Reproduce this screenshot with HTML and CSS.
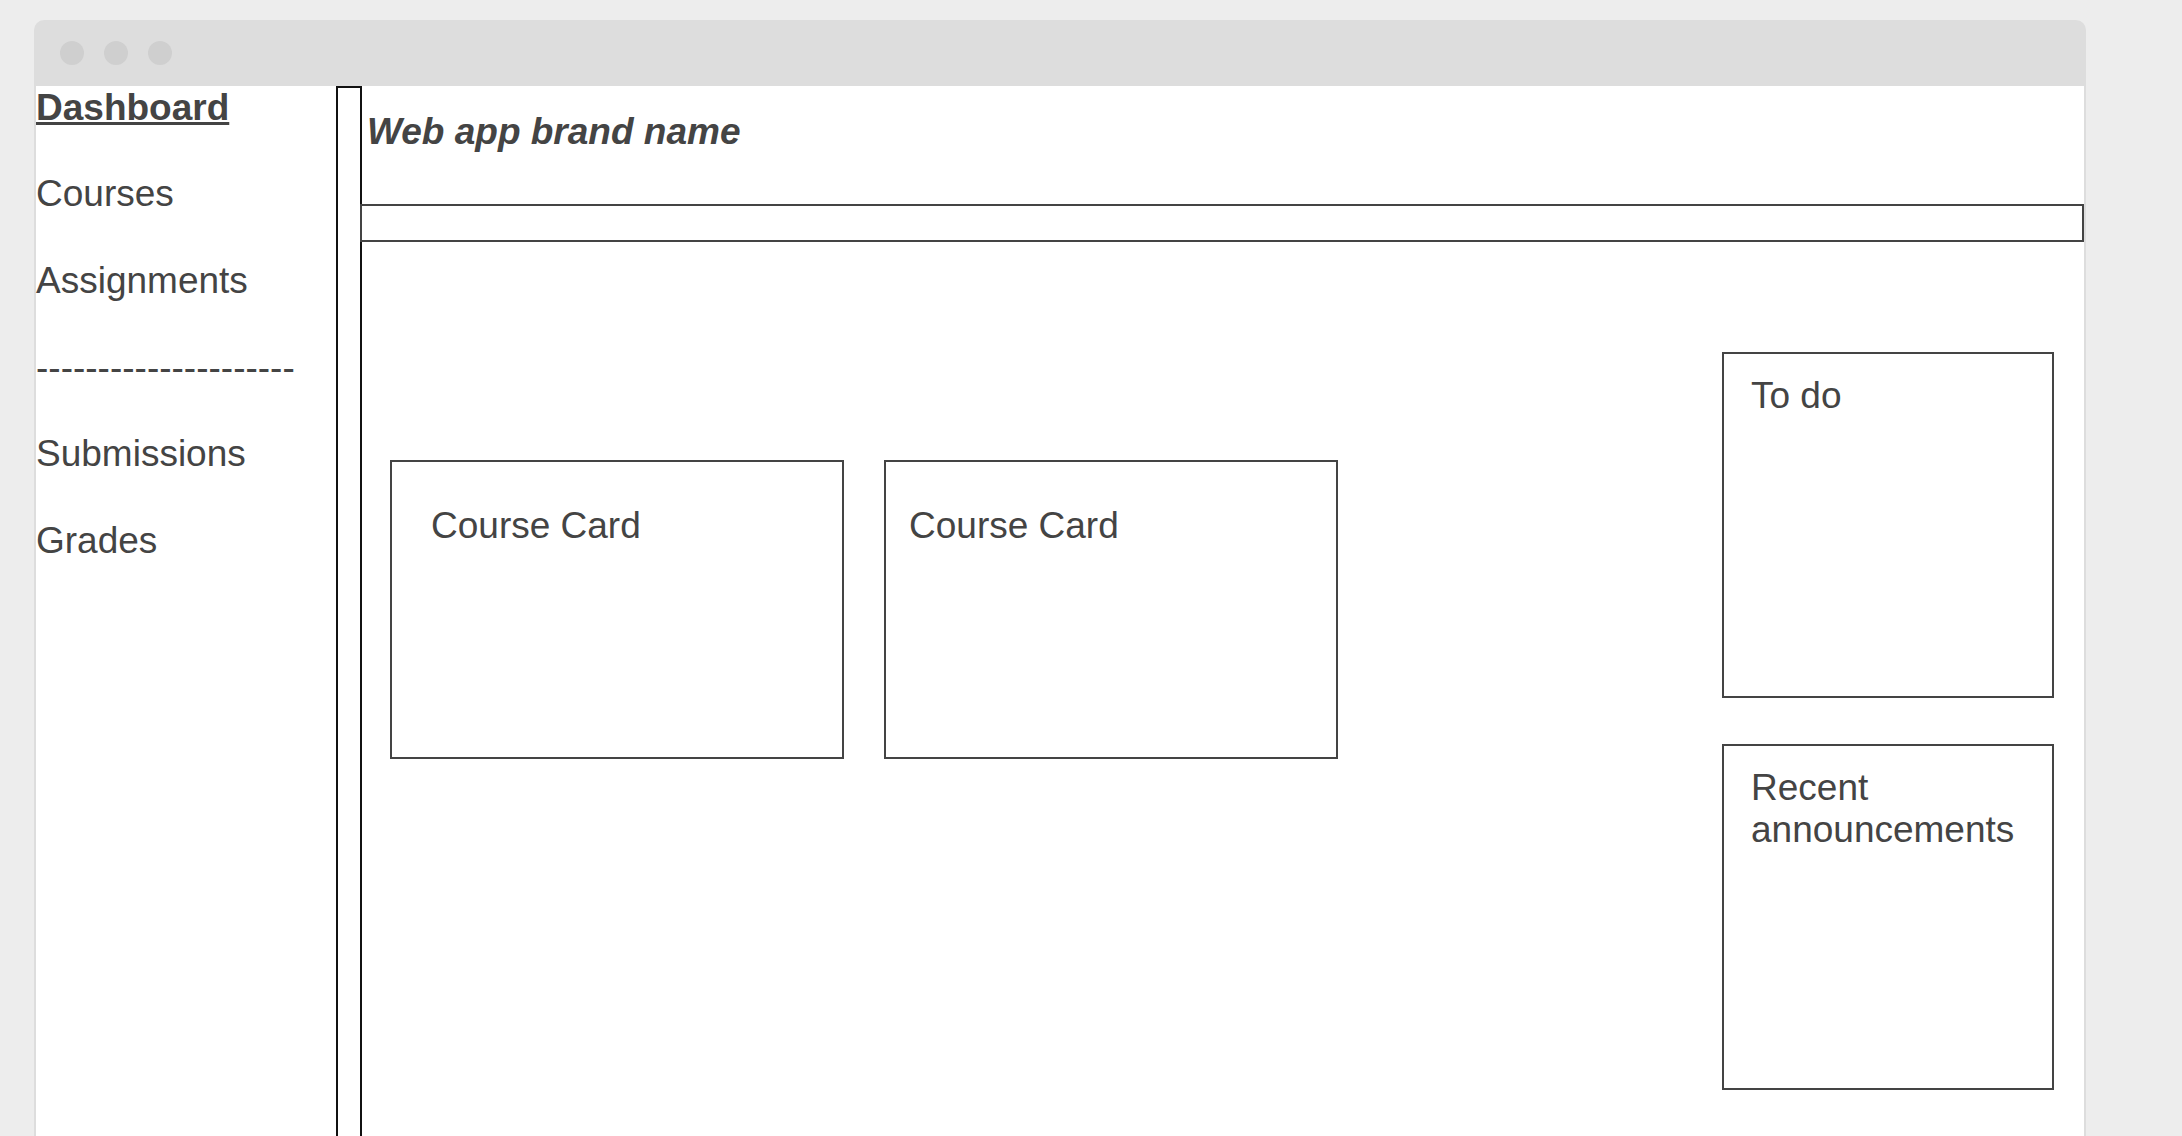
FILE: index.html
```html
<!DOCTYPE html>
<html lang="en">
<head>
<meta charset="utf-8">
<title>Dashboard wireframe</title>
<link rel="stylesheet" href="styles.css">
</head>
<body>
<div class="window">
  <div class="titlebar">
    <span class="dot"></span>
    <span class="dot"></span>
    <span class="dot"></span>
  </div>
  <div class="app">
    <nav class="sidebar">
      <a class="nav-item active" href="#">Dashboard</a>
      <a class="nav-item" href="#">Courses</a>
      <a class="nav-item" href="#">Assignments</a>
      <div class="nav-item nav-sep">---------------------</div>
      <a class="nav-item" href="#">Submissions</a>
      <a class="nav-item" href="#">Grades</a>
    </nav>
    <div class="divider"></div>
    <main class="main">
      <header class="brand-row">
        <h1 class="brand">Web app brand name</h1>
      </header>
      <div class="search-bar"></div>
      <div class="content">
        <div class="cards">
          <div class="card card-a">Course Card</div>
          <div class="card card-b">Course Card</div>
        </div>
        <aside class="panels">
          <section class="panel">To do</section>
          <section class="panel">Recent announcements</section>
        </aside>
      </div>
    </main>
  </div>
</div>
</body>
</html>
```

FILE: styles.css
```css
html, body {
  margin: 0;
  padding: 0;
  height: 1136px;
  overflow: hidden;
  background: #ededed;
}

body {
  font-family: "Liberation Sans", Arial, sans-serif;
  color: #444444;
  font-size: 37px;
}

.window {
  margin: 20px 0 0 34px;
  width: 2052px;
  height: 1116px;
  box-sizing: border-box;
  background: #dddddd;
  border-radius: 10px 10px 0 0;
  padding: 0 2px;
  display: flex;
  flex-direction: column;
}

.titlebar {
  height: 66px;
  flex: none;
  display: flex;
  align-items: center;
  gap: 20px;
  padding-left: 24px;
}

.dot {
  width: 24px;
  height: 24px;
  border-radius: 50%;
  background: #cfcfcf;
}

.app {
  flex: 1;
  background: #ffffff;
  display: flex;
  min-height: 0;
}

.sidebar {
  width: 300px;
  flex: none;
  padding-top: 0.9px;
  display: flex;
  flex-direction: column;
}

.nav-item {
  display: block;
  color: #444444;
  text-decoration: none;
  line-height: 42.5px;
  margin-bottom: 44.1px;
  white-space: nowrap;
}

.nav-item.active {
  font-weight: bold;
  text-decoration: underline;
}

.divider {
  width: 22px;
  flex: none;
  border: 2px solid #111111;
  border-bottom: none;
}

.main {
  flex: 1;
  display: flex;
  flex-direction: column;
  min-width: 0;
}

.brand-row {
  height: 118px;
  box-sizing: border-box;
  padding: 25px 0 0 5px;
}

.brand {
  margin: 0;
  font-size: 37px;
  font-weight: bold;
  font-style: italic;
  line-height: 42.5px;
}

.search-bar {
  height: 34px;
  border: 2px solid #444444;
  margin-left: -2px;
}

.content {
  display: flex;
  align-items: flex-start;
}

.cards {
  display: flex;
  gap: 40px;
  padding-left: 28px;
  margin-top: 218px;
}

.card {
  border: 2px solid #444444;
  padding-top: 42.6px;
  height: 252.4px;
  box-sizing: content-box;
  line-height: 42.5px;
}

.card.card-a {
  width: 411px;
  padding-left: 39px;
}

.card.card-b {
  width: 427px;
  padding-left: 23px;
}

.panels {
  margin-left: auto;
  margin-right: 30px;
  margin-top: 110px;
  display: flex;
  flex-direction: column;
  gap: 46px;
}

.panel {
  width: 301px;
  height: 321.1px;
  border: 2px solid #444444;
  padding: 20.9px 0 0 27px;
  line-height: 42.5px;
}
```
